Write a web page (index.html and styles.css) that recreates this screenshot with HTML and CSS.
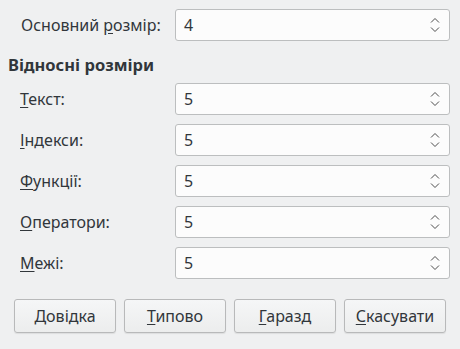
FILE: index.html
```html
<!DOCTYPE html>
<html lang="uk">
<head>
  <meta charset="UTF-8">
  <title>Розміри шрифтів</title>
  <link rel="stylesheet" href="styles.css">
</head>
<body>
  <div id="dialog">
    <div class="row top">
      <label class="label">Основний <u>р</u>озмір:</label>
      <div class="spin"><span class="value">4</span><span class="arrows"><svg width="10" height="16" viewBox="0 0 10 16"><path d="M1 5.5 L5 1.5 L9 5.5 M1 10.5 L5 14.5 L9 10.5" fill="none" stroke="#4d4d4d" stroke-width="1"/></svg></span></div>
    </div>

    <div class="heading">Відносні розміри</div>

    <div class="row">
      <label class="label"><u>Т</u>екст:</label>
      <div class="spin"><span class="value">5</span><span class="arrows"><svg width="10" height="16" viewBox="0 0 10 16"><path d="M1 5.5 L5 1.5 L9 5.5 M1 10.5 L5 14.5 L9 10.5" fill="none" stroke="#4d4d4d" stroke-width="1"/></svg></span></div>
    </div>
    <div class="row">
      <label class="label"><u>І</u>ндекси:</label>
      <div class="spin"><span class="value">5</span><span class="arrows"><svg width="10" height="16" viewBox="0 0 10 16"><path d="M1 5.5 L5 1.5 L9 5.5 M1 10.5 L5 14.5 L9 10.5" fill="none" stroke="#4d4d4d" stroke-width="1"/></svg></span></div>
    </div>
    <div class="row">
      <label class="label"><u>Ф</u>ункції:</label>
      <div class="spin"><span class="value">5</span><span class="arrows"><svg width="10" height="16" viewBox="0 0 10 16"><path d="M1 5.5 L5 1.5 L9 5.5 M1 10.5 L5 14.5 L9 10.5" fill="none" stroke="#4d4d4d" stroke-width="1"/></svg></span></div>
    </div>
    <div class="row">
      <label class="label"><u>О</u>ператори:</label>
      <div class="spin"><span class="value">5</span><span class="arrows"><svg width="10" height="16" viewBox="0 0 10 16"><path d="M1 5.5 L5 1.5 L9 5.5 M1 10.5 L5 14.5 L9 10.5" fill="none" stroke="#4d4d4d" stroke-width="1"/></svg></span></div>
    </div>
    <div class="row">
      <label class="label"><u>М</u>ежі:</label>
      <div class="spin"><span class="value">5</span><span class="arrows"><svg width="10" height="16" viewBox="0 0 10 16"><path d="M1 5.5 L5 1.5 L9 5.5 M1 10.5 L5 14.5 L9 10.5" fill="none" stroke="#4d4d4d" stroke-width="1"/></svg></span></div>
    </div>

    <div class="buttons">
      <button class="button"><u>Д</u>овідка</button>
      <button class="button"><u>Т</u>ипово</button>
      <button class="button"><u>Г</u>аразд</button>
      <button class="button"><u>С</u>касувати</button>
    </div>
  </div>
</body>
</html>
```

FILE: styles.css
```css
body {
  margin: 0;
  background: #eff0f1;
  font-family: "Noto Sans", sans-serif;
  font-size: 16px;
  color: #31363b;
}
#dialog {
  width: 460px;
  height: 349px;
  box-sizing: border-box;
  padding: 9px 10px 0 8px;
}
.row {
  display: grid;
  grid-template-columns: 167px 1fr;
  align-items: center;
  margin-bottom: 9px;
}
.row .label {
  padding-left: 12px;
}
.row.top .label {
  padding-left: 13px;
}
.row.top {
  margin-bottom: 14px;
}
u {
  text-decoration: underline;
  text-underline-offset: 2px;
}
.heading {
  font-weight: bold;
  font-size: 16.5px;
  line-height: 20px;
  margin-bottom: 8px;
}
.spin {
  height: 32px;
  box-sizing: border-box;
  border: 1px solid #bcbebf;
  border-radius: 3px;
  background: #fcfcfc;
  display: flex;
  align-items: center;
  justify-content: space-between;
  padding: 0 9px 0 8px;
}
.spin .arrows {
  display: flex;
  align-items: center;
}
.spin .arrows svg {
  display: block;
}
.buttons {
  display: flex;
  gap: 8px;
  margin-top: 20px;
  padding-left: 6px;
}
.button {
  width: 102px;
  height: 34px;
  border: 1px solid #b8b9ba;
  border-radius: 3px;
  background: linear-gradient(#f5f6f7, #eceded);
  box-shadow: 0 1px 1px rgba(0,0,0,0.08);
  font-family: "Noto Sans", sans-serif;
  font-size: 16px;
  color: #31363b;
  padding: 0;
}
```
